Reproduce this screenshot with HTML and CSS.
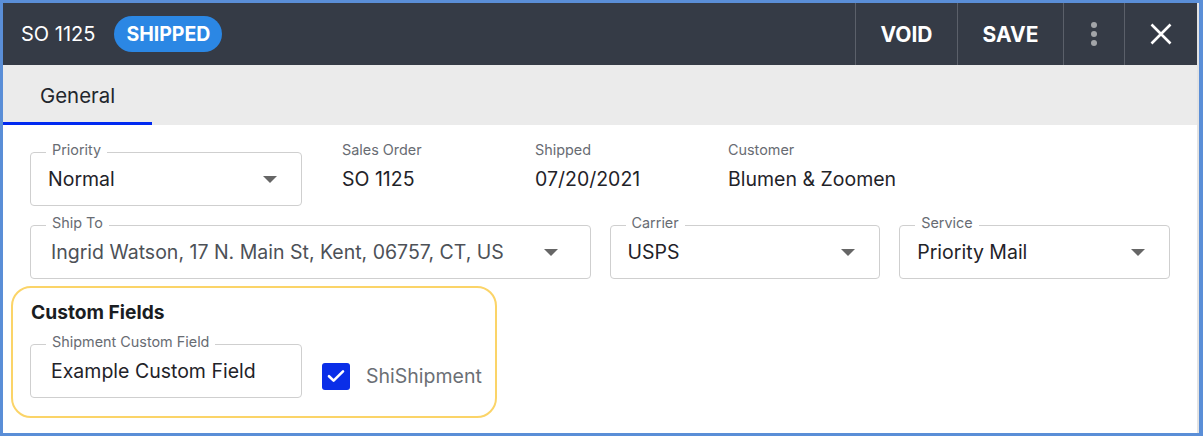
FILE: index.html
```html
<!DOCTYPE html>
<html lang="en">
<head>
<meta charset="utf-8">
<title>SO 1125</title>
<link rel="stylesheet" href="styles.css">
</head>
<body>
<div class="frame">
  <div class="app">
    <header class="topbar">
      <div class="title">SO 1125</div>
      <span class="badge">SHIPPED</span>
      <div class="actions">
        <button class="action action-void">VOID</button>
        <button class="action action-save">SAVE</button>
        <button class="action action-more" aria-label="More">
          <svg width="6" height="24" viewBox="0 0 6 24"><circle cx="3" cy="3" r="3"/><circle cx="3" cy="12" r="3"/><circle cx="3" cy="21" r="3"/></svg>
        </button>
        <button class="action action-close" aria-label="Close">
          <svg width="22" height="22" viewBox="0 0 22 22"><path d="M1.5 1.5 L20.5 20.5 M20.5 1.5 L1.5 20.5"/></svg>
        </button>
      </div>
    </header>
    <nav class="tabs">
      <div class="tab tab-active">General</div>
    </nav>
    <main class="content">
      <div class="row row-top">
        <div class="field field-select field-priority">
          <span class="field-label">Priority</span>
          <span class="field-value">Normal</span>
          <span class="caret"></span>
        </div>
        <div class="static">
          <div class="static-label">Sales Order</div>
          <div class="static-value">SO 1125</div>
        </div>
        <div class="static">
          <div class="static-label">Shipped</div>
          <div class="static-value">07/20/2021</div>
        </div>
        <div class="static static-last">
          <div class="static-label">Customer</div>
          <div class="static-value">Blumen &amp; Zoomen</div>
        </div>
      </div>
      <div class="row row-grid">
        <div class="field field-text field-shipto">
          <span class="field-label">Ship To</span>
          <span class="field-value muted">Ingrid Watson, 17 N. Main St, Kent, 06757, CT, US</span>
          <span class="caret"></span>
        </div>
        <div class="field field-select">
          <span class="field-label">Carrier</span>
          <span class="field-value">USPS</span>
          <span class="caret"></span>
        </div>
        <div class="field field-select">
          <span class="field-label">Service</span>
          <span class="field-value">Priority Mail</span>
          <span class="caret"></span>
        </div>
      </div>
      <section class="custom">
        <h2 class="custom-title">Custom Fields</h2>
        <div class="custom-row">
          <div class="field field-text field-custom">
            <span class="field-label">Shipment Custom Field</span>
            <span class="field-value">Example Custom Field</span>
          </div>
          <label class="check">
            <span class="check-box">
              <svg width="18" height="14" viewBox="0 0 18 14"><path d="M2 7.2 L6.6 11.6 L16 2.4"/></svg>
            </span>
            <span class="check-label">ShiShipment</span>
          </label>
        </div>
      </section>
    </main>
  </div>
</div>
</body>
</html>
```

FILE: styles.css
```css
* { box-sizing: border-box; }

html, body {
  margin: 0;
  padding: 0;
  background: #ffffff;
}

body {
  font-family: "Inter", "Roboto", "Liberation Sans", sans-serif;
  color: #1f2329;
}

.frame {
  width: 1203px;
  height: 436px;
  border: 3px solid #5a8ed7;
  border-right-width: 4px;
  background: #ffffff;
}

.app {
  height: 100%;
  border-right: 2px solid #e3e3e3;
  background: #ffffff;
}

/* ---------- top bar ---------- */
.topbar {
  height: 62px;
  background: #353b46;
  display: flex;
  align-items: center;
  padding-left: 18px;
  color: #ffffff;
}

.title {
  font-size: 20px;
  font-weight: 400;
}

.badge {
  margin-left: 19px;
  height: 36px;
  padding: 0 12px;
  border-radius: 18px;
  background: #2b87e4;
  color: #ffffff;
  font-size: 19.5px;
  font-weight: 700;
  display: flex;
  align-items: center;
}

.actions {
  margin-left: auto;
  display: flex;
  height: 100%;
}

.action {
  height: 100%;
  border: none;
  border-left: 1px solid #5b606a;
  background: transparent;
  color: #ffffff;
  font-family: inherit;
  font-size: 21px;
  font-weight: 700;
  padding: 0;
  display: flex;
  align-items: center;
  justify-content: center;
}

.action-void { width: 102px; }
.action-save { width: 106px; }
.action-more { width: 61px; }
.action-close { width: 73px; }

.action-more svg { fill: #a3a5a9; }
.action-close svg path {
  stroke: #ffffff;
  stroke-width: 2.6;
  fill: none;
}

/* ---------- tabs ---------- */
.tabs {
  height: 60px;
  background: #ebebeb;
  display: flex;
}

.tab {
  width: 149px;
  padding-left: 37px;
  display: flex;
  align-items: center;
  font-size: 20.4px;
  color: #22262c;
}

.tab-active {
  border-bottom: 3px solid #0029f0;
  padding-top: 3px;
}

/* ---------- content ---------- */
.content {
  padding: 27px 27px 0 8px;
}

.row {
  padding-left: 19px;
}

.row-top {
  display: flex;
  gap: 19px;
}

.row-grid {
  margin-top: 19px;
  display: grid;
  grid-template-columns: repeat(4, 1fr);
  column-gap: 19px;
}

.field {
  position: relative;
  height: 54px;
  border: 1px solid #cfcfcf;
  border-radius: 4px;
  display: flex;
  align-items: center;
  padding: 0 24px 0 17px;
}

.field-priority { width: 272px; flex: none; }
.field-shipto { grid-column: span 2; padding-right: 32px; }

.field-text { padding-left: 20px; }

.field-label {
  position: absolute;
  top: -12px;
  left: 15px;
  padding: 0 6px;
  background: #ffffff;
  font-size: 14.4px;
  line-height: 18px;
  color: #686c73;
}

.field-value {
  flex: 1;
  font-size: 19.5px;
  color: #1f2329;
  white-space: nowrap;
  overflow: hidden;
}

.field-value.muted { color: #4d5157; }

.caret {
  width: 0;
  height: 0;
  border-left: 7px solid transparent;
  border-right: 7px solid transparent;
  border-top: 7px solid #666666;
}

.static {
  width: 174px;
  flex: none;
  padding-left: 21px;
  margin-top: -11px;
  white-space: nowrap;
}

.static-last { flex: 1; }

.static-label {
  font-size: 14.4px;
  line-height: 18px;
  color: #686c73;
}

.static-value {
  margin-top: 8px;
  font-size: 19.5px;
  line-height: 24px;
  color: #1f2329;
}

/* ---------- custom fields ---------- */
.custom {
  margin-top: 7px;
  width: 486px;
  height: 132px;
  border: 2px solid #fbd468;
  border-radius: 20px;
  padding: 12px 17px 0 17px;
}

.custom-title {
  margin: 0 0 0 1px;
  font-size: 19.2px;
  line-height: 24px;
  font-weight: 700;
  color: #1a1d22;
}

.custom-row {
  margin-top: 20px;
  display: flex;
  align-items: center;
}

.field-custom { width: 272px; flex: none; }

.check {
  display: flex;
  align-items: center;
  margin-left: 20px;
  margin-top: 10px;
}

.check-box {
  width: 28px;
  height: 27px;
  border-radius: 3px;
  background: #0a2ee8;
  display: flex;
  align-items: center;
  justify-content: center;
}

.check-box svg path {
  stroke: #ffffff;
  stroke-width: 2.6;
  fill: none;
  stroke-linecap: round;
  stroke-linejoin: round;
}

.check-label {
  margin-left: 16px;
  font-size: 19.5px;
  color: #6b6f75;
}
```
